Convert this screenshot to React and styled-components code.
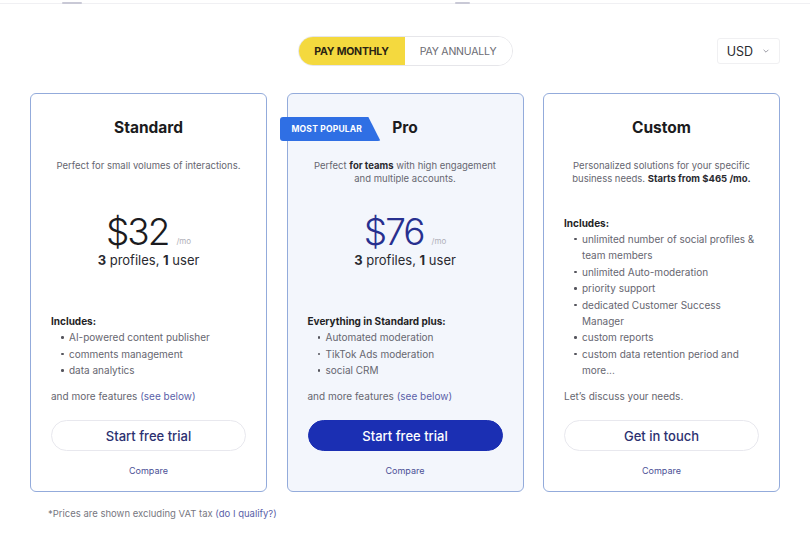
import styled, { createGlobalStyle } from "styled-components";

const GlobalStyle = createGlobalStyle`
  html, body {
    margin: 0;
    padding: 0;
    background: #ffffff;
  }
  body {
    font-family: Inter, "Noto Sans", "Liberation Sans", sans-serif;
    color: #1d1d22;
  }
  * { box-sizing: border-box; }
`;

const plans = [
  {
    name: "Standard",
    desc: <>Perfect for small volumes of interactions.</>,
    price: "$32",
    heading: "Includes:",
    items: ["AI-powered content publisher", "comments management", "data analytics"],
    more: true,
    cta: "Start free trial",
  },
  {
    name: "Pro",
    popular: true,
    desc: (
      <>
        Perfect <b>for teams</b> with high engagement
        <br />
        and multiple accounts.
      </>
    ),
    price: "$76",
    heading: "Everything in Standard plus:",
    items: ["Automated moderation", "TikTok Ads moderation", "social CRM"],
    more: true,
    cta: "Start free trial",
  },
  {
    name: "Custom",
    desc: (
      <>
        Personalized solutions for your specific
        <br />
        business needs. <b>Starts from $465 /mo.</b>
      </>
    ),
    heading: "Includes:",
    items: [
      "unlimited number of social profiles & team members",
      "unlimited Auto-moderation",
      "priority support",
      "dedicated Customer Success Manager",
      "custom reports",
      "custom data retention period and more...",
    ],
    note: "Let’s discuss your needs.",
    cta: "Get in touch",
  },
];

export default function App() {
  return (
    <>
      <GlobalStyle />
      <TopStrip>
        <TabMark $left={62} $width={20} />
        <TabMark $left={455} $width={15} />
      </TopStrip>
      <Page>
        <Header>
          <span />
          <Toggle>
            <ToggleOption $active>PAY MONTHLY</ToggleOption>
            <ToggleOption>PAY ANNUALLY</ToggleOption>
          </Toggle>
          <Currency>
            USD
            <svg width="8" height="8" viewBox="0 0 10 10">
              <path d="M2 3.5 L5 6.5 L8 3.5" fill="none" stroke="#9a9aa3" strokeWidth="1.2" />
            </svg>
          </Currency>
        </Header>
        <Cards>
          {plans.map((p) => (
            <Card key={p.name} $highlight={p.popular}>
              {p.popular && <Badge>MOST POPULAR</Badge>}
              <Title>{p.name}</Title>
              <Desc>{p.desc}</Desc>
              {p.price && (
                <>
                  <PriceRow>
                    <Price $highlight={p.popular}>{p.price}</Price>
                    <Per>/mo</Per>
                  </PriceRow>
                  <Seats>
                    <b>3</b> profiles, <b>1</b> user
                  </Seats>
                </>
              )}
              <Features>
                <FeatureHead>{p.heading}</FeatureHead>
                <List>
                  {p.items.map((it) => (
                    <Item key={it}>{it}</Item>
                  ))}
                </List>
                <Note>
                  {p.more ? (
                    <>
                      and more features <Link>(see below)</Link>
                    </>
                  ) : (
                    p.note
                  )}
                </Note>
              </Features>
              <Button $primary={p.popular}>{p.cta}</Button>
              <Compare>Compare</Compare>
            </Card>
          ))}
        </Cards>
        <Footnote>
          *Prices are shown excluding VAT tax <Link>(do I qualify?)</Link>
        </Footnote>
      </Page>
    </>
  );
}

const TopStrip = styled.div`
  position: relative;
  height: 4px;
  border-bottom: 1px solid #f0f0f3;
`;

const TabMark = styled.span`
  position: absolute;
  left: ${({ $left }) => $left}px;
  bottom: -1px;
  width: ${({ $width }) => $width}px;
  height: 2px;
  border-radius: 1px;
  background: #c9c9d6;
`;

const Page = styled.div`
  width: 750px;
  margin: 0 auto;
  padding-top: 32px;
`;

const Header = styled.div`
  display: grid;
  grid-template-columns: 1fr auto 1fr;
  align-items: center;
  height: 30px;
`;

const Toggle = styled.div`
  display: flex;
  height: 30px;
  border: 1px solid #e6e6ea;
  border-radius: 15px;
  overflow: hidden;
`;

const ToggleOption = styled.div`
  display: flex;
  align-items: center;
  justify-content: center;
  min-width: ${({ $active }) => ($active ? "106px" : "107px")};
  font-size: 10.5px;
  letter-spacing: -0.2px;
  font-weight: ${({ $active }) => ($active ? 700 : 400)};
  color: ${({ $active }) => ($active ? "#2a2413" : "#6b6b72")};
  background: ${({ $active }) => ($active ? "#f4d93e" : "#ffffff")};
`;

const Currency = styled.div`
  justify-self: end;
  display: flex;
  align-items: center;
  gap: 9px;
  height: 26px;
  padding: 0 9px;
  border: 1px solid #f0f0f2;
  border-radius: 3px;
  font-size: 12.5px;
  color: #2a2a30;
`;

const Cards = styled.div`
  display: grid;
  grid-template-columns: repeat(3, 237px);
  justify-content: space-between;
  margin-top: 27px;
`;

const Card = styled.div`
  position: relative;
  display: flex;
  flex-direction: column;
  height: 399px;
  padding: 24px 20px 14px;
  border: 1.5px solid #93abdb;
  border-radius: 6px;
  background: ${({ $highlight }) => ($highlight ? "#f3f6fc" : "#ffffff")};
`;

const Badge = styled.div`
  position: absolute;
  left: -8px;
  top: 23px;
  width: 101px;
  height: 24px;
  padding-left: 12px;
  display: flex;
  align-items: center;
  font-size: 8.5px;
  font-weight: 700;
  letter-spacing: 0.2px;
  color: #ffffff;
  background: #2f6fe4;
  border-radius: 3px;
  clip-path: polygon(0 0, 88% 0, 100% 100%, 0 100%);
`;

const Title = styled.h2`
  margin: 0;
  font-size: 15.5px;
  line-height: 20px;
  font-weight: 700;
  text-align: center;
  color: #1b1b20;
`;

const Desc = styled.p`
  margin: 22px 0 0;
  min-height: 25px;
  font-size: 9.5px;
  line-height: 12.5px;
  text-align: center;
  color: #666670;
  b {
    font-weight: 700;
    color: #2a2a30;
  }
`;

const PriceRow = styled.div`
  display: flex;
  justify-content: center;
  align-items: flex-end;
  gap: 8px;
  margin-top: 29px;
`;

const Price = styled.span`
  font-size: 37px;
  line-height: 36px;
  font-weight: 300;
  letter-spacing: -2px;
  color: ${({ $highlight }) => ($highlight ? "#27308f" : "#1b1b20")};
`;

const Per = styled.span`
  font-size: 8px;
  line-height: 10px;
  color: #b0b0b8;
  margin-bottom: 4px;
`;

const Seats = styled.div`
  margin-top: 2px;
  font-size: 13px;
  line-height: 16px;
  text-align: center;
  color: #2a2a30;
  b {
    font-weight: 700;
  }
`;

const Features = styled.div`
  margin-top: auto;
  font-size: 10px;
  line-height: 16.4px;
  color: #666670;
`;

const FeatureHead = styled.div`
  font-weight: 700;
  color: #1f1f25;
`;

const List = styled.ul`
  margin: 0;
  padding: 0 0 0 18px;
  list-style: none;
`;

const Item = styled.li`
  position: relative;
  &::before {
    content: "";
    position: absolute;
    left: -8px;
    top: 7px;
    width: 2.5px;
    height: 2.5px;
    border-radius: 50%;
    background: #55555d;
  }
`;

const Note = styled.div`
  margin-top: 9px;
`;

const Link = styled.span`
  color: #5a5fa8;
`;

const Button = styled.div`
  margin-top: 16px;
  height: 31px;
  display: flex;
  align-items: center;
  justify-content: center;
  border-radius: 16px;
  font-size: 13px;
  font-weight: 500;
  border: 1px solid ${({ $primary }) => ($primary ? "#1b2fb3" : "#e8e8ee")};
  background: ${({ $primary }) => ($primary ? "#1b2fb3" : "#ffffff")};
  color: ${({ $primary }) => ($primary ? "#ffffff" : "#2c3070")};
`;

const Compare = styled.div`
  margin-top: 14px;
  font-size: 9px;
  line-height: 12px;
  text-align: center;
  color: #4b5096;
`;

const Footnote = styled.div`
  margin-top: 16px;
  padding-left: 18px;
  font-size: 9.5px;
  color: #77777f;
`;
